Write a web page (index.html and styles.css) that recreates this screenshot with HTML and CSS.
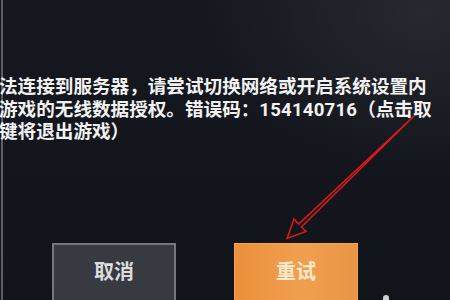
FILE: index.html
```html
<!DOCTYPE html>
<html lang="zh-CN">
<head>
    <meta charset="UTF-8">
    <meta name="viewport" content="width=device-width, initial-scale=1.0">
    <title>网络错误</title>
    <link rel="stylesheet" href="styles.css">
</head>
<body>
    <div class="screen">
        <p class="message">
            <span class="line">法连接到服务器，请尝试切换网络或开启系统设置内</span>
            <span class="line">游戏的无线数据授权。错误码：<b>154140716</b>（点击取</span>
            <span class="line">键将退出游戏）</span>
        </p>
        <div class="actions">
            <button class="btn cancel" type="button">取消</button>
            <button class="btn retry" type="button">重试</button>
        </div>
        <span class="stray"></span>

        <!-- red annotation arrow pointing at the retry button -->
        <svg class="arrow" width="450" height="300" viewBox="0 0 450 300">
            <polygon points="414,116 298.6,224 294,219 287,238.5 306,231.5 301.4,227"
                     fill="none" stroke="#d8191c" stroke-width="1.6" stroke-linejoin="miter"/>
        </svg>
    </div>
</body>
</html>
```

FILE: styles.css
```css
html, body {
    margin: 0;
    height: 100%;
}
body {
    background-color: #14161e;
    font-family: Roboto, "Noto Sans CJK SC", sans-serif;
    overflow: hidden;
}
.screen {
    position: relative;
    height: 300px;
    box-sizing: border-box;
    border-left: 2px solid #5c5f66;
    margin-left: 1px;
    padding-top: 76px;
    background:
        radial-gradient(ellipse 220px 160px at 420px 10px, rgba(70, 72, 78, 0.35), transparent),
        linear-gradient(#161820, #12141b);
}
.message {
    margin: 0 0 0 -4px;
    color: #f2f2f2;
    font-size: 18.6px;
    font-weight: 700;
    line-height: 22.5px;
    white-space: nowrap;
}
.line {
    display: block;
}
.message b {
    font-weight: 700;
    letter-spacing: 0.2px;
}
.actions {
    display: flex;
    gap: 58px;
    margin-top: 99px;
    padding-left: 49px;
}
.btn {
    width: 124px;
    height: 60px;
    box-sizing: border-box;
    padding: 0 0 4px;
    font-family: "Noto Sans CJK SC", sans-serif;
    font-size: 20px;
    font-weight: 700;
}
.cancel {
    background-color: #383a42;
    border: 2px solid #74767c;
    color: #dcdcde;
}
.retry {
    background: linear-gradient(90deg, #ec8f3c, #efa04f 55%, #ea9545);
    border: 1px solid #f0a553;
    color: #fbe9cf;
}
.stray {
    position: absolute;
    left: 380px;
    top: 295px;
    width: 6px;
    height: 5px;
    border-radius: 3px 3px 0 0;
    background-color: #cfd0d2;
}
.arrow {
    position: absolute;
    left: -3px;
    top: 0;
}
```
